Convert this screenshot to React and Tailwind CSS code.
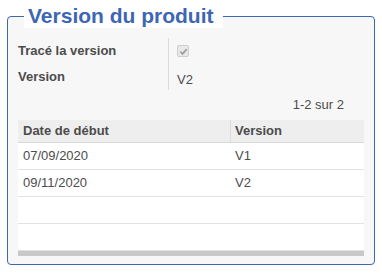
import React from 'react';

const rows = [
    { date: '07/09/2020', version: 'V1' },
    { date: '09/11/2020', version: 'V2' },
    { date: '', version: '' },
    { date: '', version: '' },
];

export default function App() {
    return (
        <div className="w-[382px] h-[273px] bg-white pt-[4px] pl-[7px] font-['Liberation_Sans',Arial,sans-serif] text-[13px] text-[#4c4c4c]">
            <fieldset className="w-[368px] h-[261px] border border-[#3d66b4] rounded-[4px] bg-[#f7f7f7] px-[10px] pt-[10px]">
                <legend className="ml-[6px] pl-[4px] pr-[9px] text-[21px] leading-[24px] font-bold text-[#3d66b4] bg-white">
                    Version du produit
                </legend>

                {/* fields */}
                <div className="grid grid-cols-[150px_1fr]">
                    <div className="font-bold h-[26px] leading-[26px]">Tracé la version</div>
                    <div className="row-span-2 border-l border-[#dcdcdc] pl-[8px]">
                        <div className="h-[26px] flex items-center">
                            <span className="w-[12px] h-[12px] rounded-[2px] border border-[#cfcfcf] bg-[#e9e9e9] flex items-center justify-center">
                                <svg width="9" height="9" viewBox="0 0 10 10">
                                    <path d="M1.5 5.2 L4 7.6 L8.6 2.4" fill="none" stroke="#a0a0a0" strokeWidth="2" />
                                </svg>
                            </span>
                        </div>
                        <div className="h-[26px] leading-[26px] pt-[3px]">V2</div>
                    </div>
                    <div className="font-bold h-[26px] leading-[26px]">Version</div>
                </div>

                {/* pager */}
                <div className="h-[30px] flex items-center justify-end pr-[20px]">1-2 sur 2</div>

                {/* list */}
                <div className="w-[346px]">
                    <div className="flex h-[23px] bg-[#eeeeee] border-b border-[#d9d9d9] font-bold">
                        <div className="w-[212px] pl-[5px] leading-[22px]">Date de début</div>
                        <div className="flex-1 border-l border-[#dcdcdc] pl-[4px] leading-[22px]">Version</div>
                    </div>
                    {rows.map((r, i) => (
                        <div key={i} className="flex h-[27px] bg-white border-b border-[#e2e2e2]">
                            <div className="w-[212px] pl-[5px] leading-[26px]">{r.date}</div>
                            <div className="flex-1 pl-[5px] leading-[26px]">{r.version}</div>
                        </div>
                    ))}
                    <div className="h-[5px] bg-[#c8c8c8]" />
                </div>
            </fieldset>
        </div>
    );
}
